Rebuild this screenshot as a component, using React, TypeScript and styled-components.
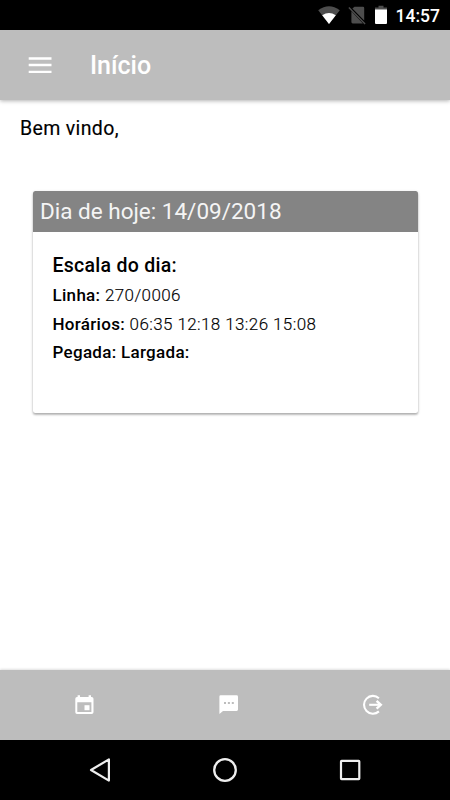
import React from "react";
import styled, { createGlobalStyle } from "styled-components";

const GlobalStyle = createGlobalStyle`
  * {
    box-sizing: border-box;
  }
  body {
    margin: 0;
    background-color: #fff;
    color: #000;
    font-family: Roboto, "Liberation Sans", sans-serif;
  }
  h1, h2, h3, p {
    margin: 0;
  }
  svg {
    display: block;
  }
`;
const Screen = styled.div`
  display: flex;
  flex-direction: column;
  width: 450px;
  height: 800px;
  overflow: hidden;
`;
const StatusBar = styled.div`
  display: flex;
  align-items: center;
  flex: 0 0 30px;
  padding-left: 317px;
  background-color: #000;
`;
const StatusIcons = styled.div`
  display: flex;
  gap: 8.5px;
`;
const Clock = styled.span`
  margin-left: 7.5px;
  padding-top: 2px;
  color: #fff;
  font-size: 17.5px;
  font-weight: 500;
  line-height: 28px;
`;
const Header = styled.header`
  display: flex;
  align-items: center;
  flex: 0 0 70px;
  padding-left: 28px;
  background-color: #bdbdbd;
  box-shadow: 0 1px 4px rgba(0, 0, 0, 0.3);
  color: #fff;
`;
const IconButton = styled.button`
  padding: 0;
  border: none;
  background: none;
  color: #fff;
  cursor: pointer;
`;
const Title = styled.h1`
  margin-left: 38px;
  padding-top: 1px;
  font-size: 25px;
  font-weight: 500;
  line-height: 30px;
`;
const Content = styled.main`
  flex: 1;
  padding: 16px 32.5px 0;
`;
const Welcome = styled.p`
  margin-left: -12.5px;
  font-size: 19.5px;
  font-weight: 400;
  line-height: 25px;
  letter-spacing: 0.35px;
  -webkit-text-stroke: 0.15px #000;
`;
const Card = styled.section`
  height: 221.5px;
  margin-top: 50.3px;
  border-radius: 2.5px;
  overflow: hidden;
  background-color: #fff;
  box-shadow: 0 2px 2px rgba(0, 0, 0, 0.18), 0 1px 3px rgba(0, 0, 0, 0.22);
`;
const CardTitle = styled.h2`
  height: 41px;
  padding-left: 7.5px;
  background-color: #848484;
  color: #f4f4f4;
  font-size: 22.5px;
  font-weight: 400;
  line-height: 40px;
`;
const CardBody = styled.div`
  padding: 20px;
`;
const Subtitle = styled.h3`
  margin-bottom: 0.7px;
  font-size: 19.5px;
  font-weight: 500;
  line-height: 28px;
  letter-spacing: 0.27px;
`;
const Line = styled.p`
  font-size: 17px;
  font-weight: 300;
  line-height: 28.75px;
  letter-spacing: 0.4px;
  -webkit-text-stroke: 0.15px #000;
  b {
    font-weight: 500;
    letter-spacing: 0.3px;
    -webkit-text-stroke: 0;
  }
`;
const TabBar = styled.nav`
  display: flex;
  flex: 0 0 70px;
  padding-left: 13px;
  padding-right: 5px;
  background-color: #bdbdbd;
  box-shadow: 0 -1px 2px rgba(0, 0, 0, 0.12);
`;
const Tab = styled(IconButton)`
  display: flex;
  flex: 1;
  justify-content: center;
  align-items: center;
`;
const SystemBar = styled.div`
  display: flex;
  justify-content: center;
  align-items: center;
  gap: 95px;
  flex: 0 0 60px;
  background-color: #000;
`;

const WifiIcon = () => (
  <svg width="24" height="20" viewBox="0 0 24 20">
    <path d="M1.2 5.2Q12 -2.6 22.8 5.2L12 19z" fill="#4d4d4d" />
    <path d="M5.2 10.2Q12 5.8 18.8 10.2L12 19z" fill="#fff" />
  </svg>
);
const NoSimIcon = () => (
  <svg width="16" height="20" viewBox="2.5 0 16 20" overflow="visible">
    <path d="M4.9 3.6L7 1.8H15.5q1.2 0 1.2 1.2V15.5zM3.9 6.2L15.4 18.4H5.2Q3.9 18.4 3.9 17z" fill="#4d4d4d" />
    <path d="M1.4 2.6L17.6 18.9" stroke="#4d4d4d" strokeWidth="1.4" />
  </svg>
);
const BatteryIcon = () => (
  <svg width="14" height="20" viewBox="0 0 14 20">
    <path d="M4.5 .8h5v1.8H13V5H1V2.6h3.5z" fill="#4d4d4d" />
    <path d="M1 4.5h12V18q0 1-1 1H2q-1 0-1-1z" fill="#fff" />
  </svg>
);
const MenuIcon = () => (
  <svg width="24" height="18" viewBox="0 0 24 18">
    <path d="M.7 2.5h22.8M.7 9h22.8M.7 15.8h22.8" stroke="currentColor" strokeWidth="2.3" />
  </svg>
);
const CalendarIcon = () => (
  <svg width="20" height="20" viewBox="0.7 0 20 20">
    <path
      fillRule="evenodd"
      d="M3.3.3h2.4V2h8.6V.3h2.4V2h.6q1.9 0 1.9 1.7v13.6q0 1.7-1.9 1.7H2.7Q1 19 1 17.3V3.7Q1 2 2.7 2h.6zM3 7.2v9.9h14.1V7.2z"
      fill="currentColor"
    />
    <path d="M10.2 10.2h5v5h-5z" fill="currentColor" />
  </svg>
);
const ChatIcon = () => (
  <svg width="20" height="20" viewBox="0 0 20 20">
    <path d="M1.6.3h16q1.4 0 1.4 1.4v12.9q0 1.4-1.4 1.4H4L.4 19V1.5Q.4.3 1.6.3z" fill="currentColor" />
    <path d="M5 7h2v2H5zM8.9 7h2v2h-2zM12.8 7h2v2h-2z" fill="#bdbdbd" />
  </svg>
);
const ExitIcon = () => (
  <svg width="22" height="22" viewBox="0 0 22 22" fill="none" stroke="currentColor" strokeWidth="2.1">
    <path d="M16.9 4.2A8.9 8.9 0 1 0 16.9 17.4" />
    <path d="M7.2 10.8H18" />
    <path d="M14.6 6.9L18.8 10.8L14.6 14.7" strokeWidth="2.4" />
  </svg>
);
const BackIcon = () => (
  <svg width="30" height="30" viewBox="0 0 30 30">
    <path d="M6 15L23.9 4.4V25.6z" fill="none" stroke="#eee" strokeWidth="2.2" strokeLinejoin="round" />
  </svg>
);
const HomeIcon = () => (
  <svg width="30" height="30" viewBox="0 0 30 30">
    <circle cx="15" cy="15" r="10.8" fill="none" stroke="#eee" strokeWidth="2.3" />
  </svg>
);
const RecentIcon = () => (
  <svg width="30" height="30" viewBox="0 0 30 30">
    <rect x="6" y="5.8" width="18.3" height="18.3" rx=".6" fill="none" stroke="#eee" strokeWidth="2.2" />
  </svg>
);

const lines = [
  { label: "Linha:", value: "270/0006" },
  { label: "Horários:", value: "06:35 12:18 13:26 15:08" },
  { label: "Pegada: Largada:", value: "" },
];

export default function App() {
  return (
    <>
      <GlobalStyle />
      <Screen>
        <StatusBar>
          <StatusIcons>
            <WifiIcon />
            <NoSimIcon />
            <BatteryIcon />
          </StatusIcons>
          <Clock>14:57</Clock>
        </StatusBar>
        <Header>
          <IconButton aria-label="Menu">
            <MenuIcon />
          </IconButton>
          <Title>Início</Title>
        </Header>
        <Content>
          <Welcome>Bem vindo,</Welcome>
          <Card>
            <CardTitle>Dia de hoje: 14/09/2018</CardTitle>
            <CardBody>
              <Subtitle>Escala do dia:</Subtitle>
              {lines.map(({ label, value }) => (
                <Line key={label}>
                  <b>{label}</b> {value}
                </Line>
              ))}
            </CardBody>
          </Card>
        </Content>
        <TabBar>
          <Tab aria-label="Escala">
            <CalendarIcon />
          </Tab>
          <Tab aria-label="Mensagens">
            <ChatIcon />
          </Tab>
          <Tab aria-label="Sair">
            <ExitIcon />
          </Tab>
        </TabBar>
        <SystemBar>
          <BackIcon />
          <HomeIcon />
          <RecentIcon />
        </SystemBar>
      </Screen>
    </>
  );
}
